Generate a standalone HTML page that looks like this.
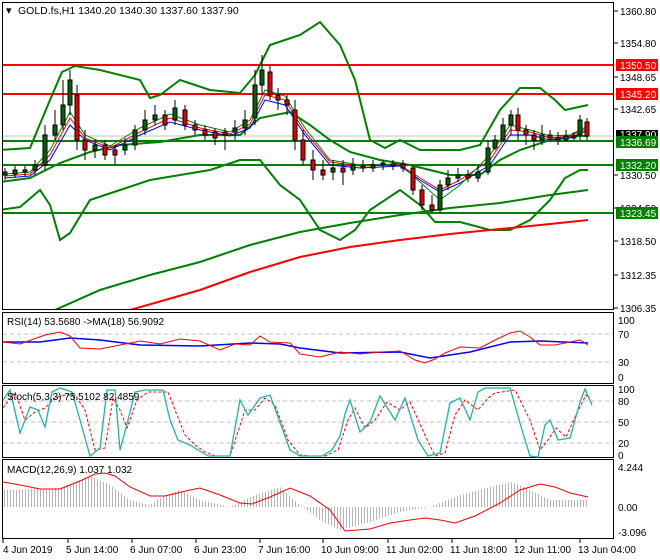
<!DOCTYPE html><html><head><style>body{margin:0;background:#fff}svg{display:block;font-family:"Liberation Sans",sans-serif;font-size:10px}</style></head><body>
<svg width="660" height="560" xmlns="http://www.w3.org/2000/svg">
<defs><pattern id="hb" width="3" height="10" patternUnits="userSpaceOnUse"><rect x="1" width="1" height="10" fill="#b4b4b4"/></pattern>
<clipPath id="cm"><rect x="3" y="3" width="610" height="306"/></clipPath></defs>
<rect width="660" height="560" fill="#fff"/>
<g fill="none" stroke="#000"><rect x="2.5" y="2.5" width="611" height="307"/><rect x="2.5" y="312.5" width="611" height="71"/><rect x="2.5" y="385.5" width="611" height="72"/><rect x="2.5" y="459.5" width="611" height="79"/></g>
<g clip-path="url(#cm)" fill="none">
<line x1="3" y1="136" x2="613" y2="136" stroke="#c0c0c0"/>
<g stroke="#f00" stroke-width="2"><line x1="3" y1="65" x2="613" y2="65"/><line x1="3" y1="94" x2="613" y2="94"/></g>
<g stroke="#008000" stroke-width="2"><line x1="3" y1="141" x2="613" y2="141"/><line x1="3" y1="165" x2="613" y2="165"/><line x1="3" y1="213" x2="613" y2="213"/></g>
<g stroke="#008000" stroke-width="2">
<polyline points="0,150 30,148 50,100 62,72 75,66 100,70 140,80 150,98 160,95 180,80 210,90 240,93 255,75 270,45 300,35 320,22 340,45 355,80 370,140 385,148 400,140 420,150 440,150 460,150 480,145 500,110 520,88 540,88 555,100 565,110 588,105"/>
<polyline points="0,210 20,207 40,190 50,205 60,240 70,233 90,200 120,190 150,180 180,175 210,170 240,160 260,160 280,185 300,200 320,230 340,240 355,230 370,210 400,190 420,205 435,222 460,222 490,230 510,230 530,220 550,200 565,178 580,170 588,170"/>
<polyline points="0,182 30,178 60,163 90,152 120,145 160,142 200,135 240,135 260,118 290,112 310,125 330,140 350,152 380,160 410,165 430,170 450,175 480,175 500,160 520,150 550,140 575,136 588,136"/>
<polyline points="55,310 100,290 150,275 200,262 250,245 300,232 350,223 400,215 450,208 500,203 550,195 588,190"/>
<polyline points="380,128 420,130 440,138 460,140 480,140 490,130 500,120 515,108 540,104 560,100 588,108" stroke="none"/>
</g>
<polyline stroke="#f00" stroke-width="2" points="130,310 200,290 250,272 300,257 350,247 400,240 450,234 500,229 550,224 588,220"/>
<polyline stroke="#00f" points="5,178 30,176 50,160 70,125 85,140 110,150 140,135 170,122 200,130 230,136 250,128 265,100 285,105 305,135 330,165 360,168 400,166 420,180 440,192 460,183 490,165 510,135 530,135 550,140 570,138 588,130"/>
<polyline stroke="#f00" points="5,176 30,174 50,155 70,118 85,138 110,148 140,132 170,118 200,128 230,134 250,124 265,95 285,100 305,132 330,162 360,166 400,165 420,178 440,190 460,180 490,160 510,130 530,132 550,138 570,136 588,128"/>
<polyline stroke="#008000" points="5,174 30,172 50,150 70,112 85,135 110,146 140,128 170,114 200,125 230,132 250,120 265,90 285,96 305,128 330,160 360,165 400,164 420,182 440,200 460,185 490,155 510,125 530,130 550,136 570,135 588,126"/>
<g stroke="#000" stroke-width="1">
<path d="M5,168V180M15,166V178M25,165V176M35,160V175M45,125V170M55,110V140M63,80V130M70,70V115M77,85V150M85,130V160M95,140V158M105,140V160M115,145V165M125,138V155M135,125V150M145,110V135M155,105V125M165,110V130M175,100V125M185,105V130M195,120V135M205,125V140M215,128V145M225,128V150M235,120V140M245,110V135M255,70V125M262,55V95M270,65V100M278,88V110M287,95V115M295,100V150M303,130V165M313,150V180M323,160V180M333,160V180M343,160V185M353,158V175M363,160V172M373,160V172M383,160V170M393,160V170M403,160V172M413,165V195M422,185V210M432,195V212M440,180V213M448,170V190M458,168V182M468,170V182M478,165V182M488,140V175M495,135V150M503,118V142M511,110V135M518,108V140M526,125V145M534,130V150M542,125V145M550,130V142M558,132V145M566,130V142M574,132V140M580,115V140M587,118V140"/>
</g>
<g stroke="#000" stroke-width="1" fill="#006400">
<rect x="3" y="172" width="4" height="3"/><rect x="13" y="170" width="4" height="4"/><rect x="23" y="170" width="4" height="2"/><rect x="33" y="165" width="4" height="5"/><rect x="43" y="135" width="4" height="30"/><rect x="53" y="125" width="4" height="10"/><rect x="61" y="105" width="4" height="20"/><rect x="68" y="80" width="4" height="25"/><rect x="93" y="145" width="4" height="5"/><rect x="123" y="145" width="4" height="5"/><rect x="133" y="130" width="4" height="15"/><rect x="143" y="120" width="4" height="10"/><rect x="153" y="115" width="4" height="5"/><rect x="173" y="108" width="4" height="12"/><rect x="233" y="128" width="4" height="4"/><rect x="243" y="120" width="4" height="8"/><rect x="253" y="85" width="4" height="33"/><rect x="260" y="70" width="4" height="15"/><rect x="331" y="168" width="4" height="4"/><rect x="351" y="165" width="4" height="5"/><rect x="371" y="165" width="4" height="3"/><rect x="381" y="163" width="4" height="2"/><rect x="438" y="185" width="4" height="25"/><rect x="446" y="178" width="4" height="7"/><rect x="456" y="175" width="4" height="3"/><rect x="476" y="172" width="4" height="6"/><rect x="486" y="148" width="4" height="24"/><rect x="493" y="140" width="4" height="8"/><rect x="501" y="125" width="4" height="15"/><rect x="509" y="115" width="4" height="10"/><rect x="540" y="135" width="4" height="5"/><rect x="564" y="136" width="4" height="4"/><rect x="578" y="120" width="4" height="15"/>
</g>
<g stroke="#000" stroke-width="1" fill="#e00000">
<rect x="75" y="95" width="4" height="45"/><rect x="83" y="140" width="4" height="10"/><rect x="103" y="145" width="4" height="10"/><rect x="113" y="150" width="4" height="5"/><rect x="163" y="115" width="4" height="10"/><rect x="183" y="110" width="4" height="15"/><rect x="193" y="125" width="4" height="5"/><rect x="203" y="130" width="4" height="5"/><rect x="213" y="132" width="4" height="6"/><rect x="223" y="132" width="4" height="3"/><rect x="268" y="72" width="4" height="23"/><rect x="276" y="95" width="4" height="5"/><rect x="285" y="100" width="4" height="5"/><rect x="293" y="110" width="4" height="30"/><rect x="301" y="140" width="4" height="20"/><rect x="311" y="160" width="4" height="10"/><rect x="321" y="170" width="4" height="5"/><rect x="341" y="168" width="4" height="4"/><rect x="361" y="166" width="4" height="2"/><rect x="391" y="164" width="4" height="2"/><rect x="401" y="164" width="4" height="4"/><rect x="411" y="168" width="4" height="22"/><rect x="420" y="190" width="4" height="15"/><rect x="430" y="205" width="4" height="5"/><rect x="466" y="175" width="4" height="3"/><rect x="516" y="115" width="4" height="15"/><rect x="524" y="130" width="4" height="5"/><rect x="532" y="135" width="4" height="5"/><rect x="548" y="135" width="4" height="3"/><rect x="556" y="138" width="4" height="2"/><rect x="572" y="136" width="4" height="2"/><rect x="585" y="122" width="4" height="14"/>
</g>
</g>
<text x="6" y="14" font-size="11">▾</text><text x="18" y="14" font-size="10.5">GOLD.fs,H1  1340.20 1340.30 1337.60 1337.90</text>
<g stroke="#000"><path d="M614,11h4M614,43h4M614,77h4M614,109h4M614,175h4M614,208h4M614,241h4M614,275h4M614,308h4"/></g>
<g font-size="10"><text x="620" y="15">1360.80</text><text x="620" y="47">1354.80</text><text x="620" y="81">1348.65</text><text x="620" y="113">1342.65</text><text x="620" y="179">1330.50</text><text x="620" y="212">1324.50</text><text x="620" y="245">1318.50</text><text x="620" y="279">1312.35</text><text x="620" y="312">1306.35</text></g>
<rect x="616" y="59" width="42" height="12" fill="#f00"/><text x="620" y="69" fill="#fff">1350.50</text>
<rect x="616" y="88" width="42" height="12" fill="#f00"/><text x="620" y="98" fill="#fff">1345.20</text>
<rect x="616" y="130" width="42" height="8" fill="#000"/><text x="620" y="138" fill="#fff">1337.90</text>
<rect x="616" y="136" width="42" height="12" fill="#008000"/><text x="620" y="146" fill="#fff">1336.69</text>
<rect x="616" y="159" width="42" height="12" fill="#008000"/><text x="620" y="169" fill="#fff">1332.20</text>
<rect x="616" y="207" width="42" height="12" fill="#008000"/><text x="620" y="217" fill="#fff">1323.45</text>
<!-- RSI -->
<g stroke="#c0c0c0" stroke-dasharray="4,3"><line x1="3" y1="334" x2="613" y2="334"/><line x1="3" y1="362" x2="613" y2="362"/></g>
<polyline fill="none" stroke="#00f" stroke-width="1.5" points="3,342 40,342 70,338 100,340 140,345 200,346 250,343 280,344 300,348 340,353 400,352 430,358 470,352 510,342 540,341 588,343"/>
<polyline fill="none" stroke="#f00" points="3,342 20,344 45,335 60,332 70,336 80,348 100,349 120,345 140,341 160,344 180,339 200,341 220,350 235,344 250,345 260,336 270,342 290,343 300,354 320,357 340,352 360,354 380,352 400,351 415,360 425,363 435,359 445,353 460,347 480,348 495,340 510,333 520,331 530,337 540,345 555,345 570,342 580,340 588,345"/>
<text x="7" y="325">RSI(14) 53.5680  -&gt;MA(18) 56.9092</text>
<g font-size="10"><text x="618" y="324">100</text><text x="618" y="338">70</text><text x="618" y="366">30</text><text x="618" y="381">0</text></g>
<!-- Stoch -->
<g stroke="#c0c0c0" stroke-dasharray="4,3"><line x1="3" y1="401" x2="613" y2="401"/><line x1="3" y1="422" x2="613" y2="422"/><line x1="3" y1="443" x2="613" y2="443"/></g>
<polyline fill="none" stroke="#f00" stroke-dasharray="3,2" points="3,408 15,392 25,420 35,412 45,408 55,398 65,395 75,395 85,410 95,450 105,448 113,398 120,410 127,428 137,400 148,392 168,392 175,410 185,435 195,445 205,452 215,456 230,456 245,410 255,410 265,398 275,405 288,440 300,455 310,456 325,456 338,450 348,420 355,408 365,428 375,420 387,402 400,410 410,402 425,435 435,456 445,453 455,415 465,400 478,410 488,398 495,393 515,390 530,420 540,450 548,440 556,428 566,437 576,415 586,395 590,400"/>
<polyline fill="none" stroke="#20b2aa" stroke-width="1.3" points="3,400 10,390 20,433 30,407 38,410 45,427 52,392 60,388 72,392 80,420 90,456 100,448 107,390 115,390 120,450 128,420 135,392 145,390 163,390 170,420 178,440 190,445 198,450 208,456 230,456 240,400 248,415 260,398 270,395 282,428 290,450 300,456 322,456 332,450 340,436 345,414 350,400 360,432 370,422 380,396 395,420 405,398 418,440 428,456 440,453 450,403 460,398 470,420 478,392 485,388 510,388 522,430 530,456 538,457 545,425 550,420 558,440 570,438 580,402 585,389 592,405"/>
<text x="7" y="400">Stoch(5,3,3) 75.5102 82.4859</text>
<g font-size="10"><text x="618" y="393">100</text><text x="618" y="405">80</text><text x="618" y="426">50</text><text x="618" y="447">20</text><text x="618" y="459">0</text></g>
<!-- MACD -->
<polygon fill="url(#hb)" points="3,507 3,490 60,488 90,476 110,485 130,500 150,505 165,495 180,490 200,500 230,507 255,495 280,487 300,505 320,520 340,530 370,522 400,512 430,507 460,495 490,487 510,482 520,485 550,500 588,500 588,507"/>
<polyline fill="none" stroke="#f00" points="3,482 20,485 40,489 60,489 80,481 95,474 105,473 115,476 130,487 150,496 165,496 190,490 200,488 220,495 240,503 252,504 270,497 290,488 310,496 330,510 345,531 370,529 390,523 410,520 425,518 440,520 455,523 475,516 500,503 520,490 540,484 555,487 570,493 588,497"/>
<text x="7" y="473">MACD(12,26,9) 1.037 1.032</text>
<g font-size="10"><text x="618" y="471">4.244</text><text x="618" y="511">0.00</text><text x="618" y="536">-3.096</text></g>
<!-- x axis -->
<g stroke="#000"><path d="M3,539v4M68,539v4M132,539v4M196,539v4M260,539v4M323,539v4M388,539v4M452,539v4M516,539v4M580,539v4"/></g>
<g font-size="10"><text x="3" y="553">4 Jun 2019</text><text x="66" y="553">5 Jun 14:00</text><text x="130" y="553">6 Jun 07:00</text><text x="194" y="553">6 Jun 23:00</text><text x="258" y="553">7 Jun 16:00</text><text x="321" y="553">10 Jun 09:00</text><text x="386" y="553">11 Jun 02:00</text><text x="450" y="553">11 Jun 18:00</text><text x="514" y="553">12 Jun 11:00</text><text x="578" y="553">13 Jun 04:00</text></g>
</svg></body></html>
